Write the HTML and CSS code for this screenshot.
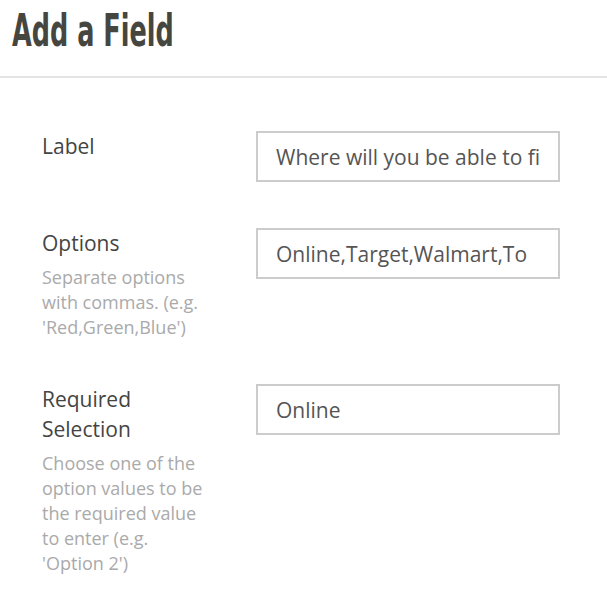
FILE: index.html
```html
<!DOCTYPE html>
<html>
<head>
    <title>Add a Field</title>
    <meta charset="utf-8">
    <link rel="stylesheet" href="styles.css">
</head>
<body>
    <div class="header">
        <h1>Add a Field</h1>
    </div>

    <form class="field-form">
        <div class="row">
            <div class="label-col">
                <label class="label" for="f-label">Label</label>
            </div>
            <input class="text-input" id="f-label" type="text" value="Where will you be able to find it?">
        </div>

        <div class="row">
            <div class="label-col">
                <label class="label" for="f-options">Options</label>
                <p class="help">Separate options with commas. (e.g. 'Red,Green,Blue')</p>
            </div>
            <input class="text-input" id="f-options" type="text" value="Online,Target,Walmart,To">
        </div>

        <div class="row">
            <div class="label-col">
                <label class="label" for="f-required">Required Selection</label>
                <p class="help">Choose one of the option values to be the required value to enter (e.g. 'Option 2')</p>
            </div>
            <input class="text-input" id="f-required" type="text" value="Online">
        </div>
    </form>
</body>
</html>
```

FILE: styles.css
```css
body {
    font-family: "Open Sans", "Liberation Sans", sans-serif;
    background-color: #ffffff;
    margin: 0;
    padding: 0;
}

.header {
    height: 76px;
    padding: 0 12px;
    border-bottom: 2px solid #e4e4e4;
    box-sizing: content-box;
}

.header h1 {
    margin: 0;
    padding-top: 9px;
    font-family: "Liberation Sans Narrow", "DejaVu Sans Condensed", sans-serif;
    font-weight: bold;
    font-size: 44px;
    line-height: 44px;
    color: #464641;
    transform: scaleX(0.645);
    transform-origin: left center;
}

.field-form {
    padding: 53px 0 0 42px;
}

.row {
    display: grid;
    grid-template-columns: 214px 304px;
    align-items: start;
    margin-bottom: 46px;
}

.label-col {
    width: 170px;
}

.label {
    display: block;
    font-size: 21px;
    line-height: 30px;
    color: #444444;
}

.help {
    margin: 7px 0 -2px;
    font-size: 18px;
    line-height: 25px;
    color: #aaaaaa;
}

.text-input {
    box-sizing: border-box;
    width: 304px;
    height: 51px;
    padding: 0 18px;
    border: 2px solid #cccccc;
    border-radius: 0;
    font-family: "Open Sans", "Liberation Sans", sans-serif;
    font-size: 21px;
    color: #555555;
    outline: none;
}
```
